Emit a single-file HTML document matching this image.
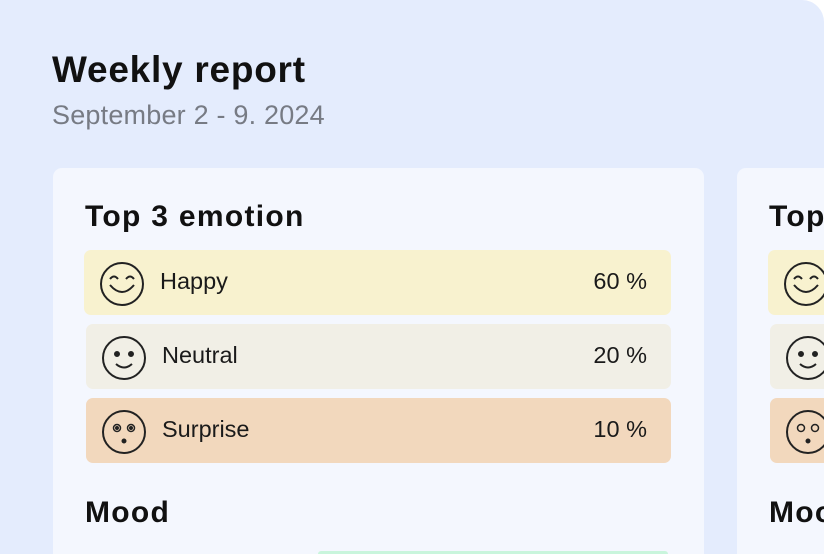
<html><head><style>
html,body{margin:0;width:824px;height:554px;overflow:hidden}
body{background:#fff;font-family:"Liberation Sans",sans-serif;position:relative}
.bg{position:absolute;left:0;top:0;width:824px;height:554px;background:#e4ecfd;border-radius:0 22px 0 0}
.t{position:absolute;left:52px;top:49px;font-size:37px;font-weight:bold;color:#111;letter-spacing:0.75px}
.s{position:absolute;left:52px;top:100px;font-size:27px;color:#777b84;letter-spacing:0.2px}
.card{position:absolute;top:168px;width:651px;height:386px;background:#f4f7fe;border-radius:9px 9px 0 0;overflow:hidden}
.h{position:absolute;left:32px;font-size:30px;font-weight:bold;color:#111;letter-spacing:1.3px}
.row{position:absolute;height:65px;border-radius:7px;font-size:23.5px;color:#1a1a1a}
.row svg{position:absolute;left:14px;top:10px}
.row .n{position:absolute;left:76px;top:18px}
.row .p{position:absolute;right:24px;top:18px}
</style></head><body>
<div class="bg"></div>
<div class="t">Weekly report</div>
<div class="s">September 2 - 9. 2024</div>
<div class="card" style="left:53px">
<div class="h" style="top:32px">Top 3 emotion</div>
<div class="row" style="left:31px;top:82px;width:587px;background:#f8f2cf">
<svg width="48" height="48" viewBox="0 0 48 48" fill="none" stroke="#222" stroke-width="2"><circle cx="24" cy="24" r="21"/><path d="M12 19q4-5 8 0M28 19q4-5 8 0M12 25q12 14 24 0"/></svg>
<span class="n">Happy</span><span class="p">60 %</span></div>
<div class="row" style="left:33px;top:156px;width:585px;background:#f1efe6">
<svg width="48" height="48" viewBox="0 0 48 48" fill="none" stroke="#222" stroke-width="2"><circle cx="24" cy="24" r="21"/><circle cx="17" cy="20" r="2" fill="#222"/><circle cx="31" cy="20" r="2" fill="#222"/><path d="M16 30q8 7 16 0"/></svg>
<span class="n">Neutral</span><span class="p">20 %</span></div>
<div class="row" style="left:33px;top:230px;width:585px;background:#f2d8bd">
<svg width="48" height="48" viewBox="0 0 48 48" fill="none" stroke="#222" stroke-width="2"><circle cx="24" cy="24" r="21"/><circle cx="17" cy="20" r="3.5" stroke-width="1.5"/><circle cx="31" cy="20" r="3.5" stroke-width="1.5"/><circle cx="17" cy="20" r="1" fill="#222"/><circle cx="31" cy="20" r="1" fill="#222"/><circle cx="24" cy="33" r="1.5" fill="#222"/></svg>
<span class="n">Surprise</span><span class="p">10 %</span></div>
<div class="h" style="top:328px">Mood</div>
<div style="position:absolute;left:265px;top:383px;width:350px;height:6px;background:#c9f5dc;border-radius:4px"></div>
</div>
<div class="card" style="left:737px;width:87px;border-radius:9px 0 0 0">
<div class="h" style="top:32px;white-space:nowrap">Top 3 emotion</div>
<div class="row" style="left:31px;top:82px;width:587px;background:#f8f2cf">
<svg width="48" height="48" viewBox="0 0 48 48" fill="none" stroke="#222" stroke-width="2"><circle cx="24" cy="24" r="21"/><path d="M12 19q4-5 8 0M28 19q4-5 8 0M12 25q12 14 24 0"/></svg></div>
<div class="row" style="left:33px;top:156px;width:585px;background:#f1efe6">
<svg width="48" height="48" viewBox="0 0 48 48" fill="none" stroke="#222" stroke-width="2"><circle cx="24" cy="24" r="21"/><circle cx="17" cy="20" r="2" fill="#222"/><circle cx="31" cy="20" r="2" fill="#222"/><path d="M16 30q8 7 16 0"/></svg></div>
<div class="row" style="left:33px;top:230px;width:585px;background:#f2d8bd">
<svg width="48" height="48" viewBox="0 0 48 48" fill="none" stroke="#222" stroke-width="2"><circle cx="24" cy="24" r="21"/><circle cx="17" cy="20" r="3.5" stroke-width="1.5"/><circle cx="31" cy="20" r="3.5" stroke-width="1.5"/><circle cx="24" cy="33" r="1.5" fill="#222"/></svg></div>
<div class="h" style="top:328px;white-space:nowrap">Mood</div>
</div>
</body></html>
